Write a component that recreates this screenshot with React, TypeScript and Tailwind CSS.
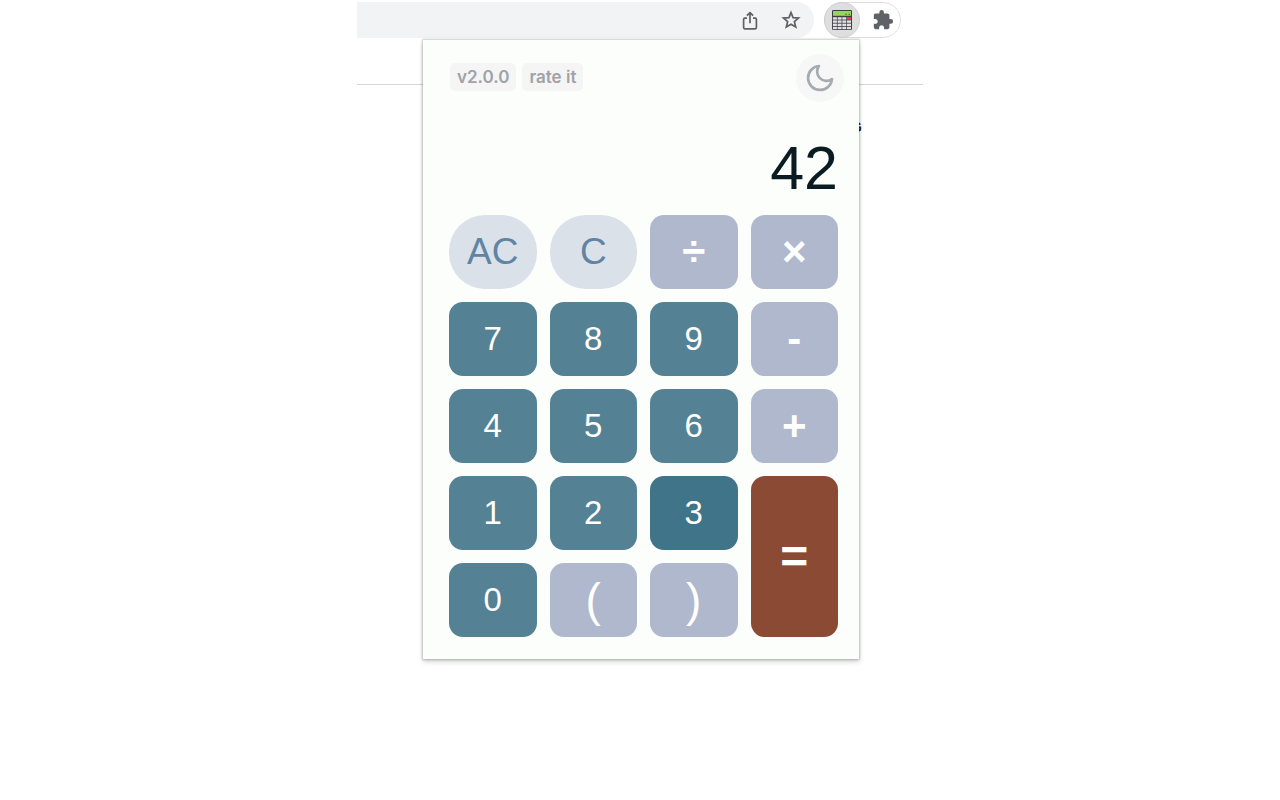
import { MdExtension } from "react-icons/md";

type Key = { label: string; name?: string; style: string };

const NUMBER = "rounded-[14px] bg-[#548294] pb-[2px] text-[33px] text-white";
const ACTIVE = "rounded-[14px] bg-[#407488] pb-[2px] text-[33px] text-white";
const CLEAR = "rounded-[36px] bg-[#dbe1e9] pb-[2px] text-[37px] text-[#5f84a4]";
const OPERATOR = "rounded-[14px] bg-[#b0b8ce] text-[42px] font-bold text-white";
const PAREN = "rounded-[14px] bg-[#b0b8ce] text-[46px] text-white";
const EQUALS = "row-span-2 rounded-[14px] bg-[#8a4a33] text-[48px] font-bold text-white";

const keys: Key[] = [
  { label: "AC", name: "All clear", style: CLEAR },
  { label: "C", name: "Clear", style: CLEAR },
  { label: "÷", name: "Divide", style: OPERATOR },
  { label: "×", name: "Multiply", style: OPERATOR },
  { label: "7", style: NUMBER },
  { label: "8", style: NUMBER },
  { label: "9", style: NUMBER },
  { label: "-", name: "Subtract", style: OPERATOR },
  { label: "4", style: NUMBER },
  { label: "5", style: NUMBER },
  { label: "6", style: NUMBER },
  { label: "+", name: "Add", style: OPERATOR },
  { label: "1", style: NUMBER },
  { label: "2", style: NUMBER },
  { label: "3", style: ACTIVE },
  { label: "=", name: "Equals", style: EQUALS },
  { label: "0", style: NUMBER },
  { label: "(", name: "Open parenthesis", style: PAREN },
  { label: ")", name: "Close parenthesis", style: PAREN },
];

function CalculatorIcon() {
  const rows = [7.2, 10.4, 13.6, 16.8];
  const cols = [0.9, 5.6, 10.3, 15];
  return (
    <svg viewBox="0 0 20 20" className="size-5" aria-hidden="true">
      <rect width="20" height="20" rx="1.3" fill="#3f3e42" />
      <rect x="1" y="1" width="18" height="4.8" fill="#96d65c" />
      <path d="M13.4 4.4h1.3M16.6 4.4h1.3" stroke="#47722c" strokeWidth="1.1" />
      {rows.map((y, r) =>
        cols.map((x, c) => (
          <rect
            key={`${x}-${y}`}
            x={x}
            y={y}
            width="4"
            height="2.4"
            fill={r === 0 && c === 3 ? "#f0444c" : "#e2e1e4"}
          />
        )),
      )}
    </svg>
  );
}

function ShareIcon() {
  return (
    <svg
      viewBox="0 0 20 20"
      className="size-5"
      fill="none"
      stroke="currentColor"
      strokeWidth="1.7"
      strokeLinejoin="round"
      aria-hidden="true"
    >
      <path d="M7 8.2H4.8a1.2 1.2 0 0 0-1.2 1.2v8.2a1.2 1.2 0 0 0 1.2 1.2h10.4a1.2 1.2 0 0 0 1.2-1.2V9.4a1.2 1.2 0 0 0-1.2-1.2H13" />
      <path d="M10 13.2V2.8M6.9 5.7 10 2.6l3.1 3.1" />
    </svg>
  );
}

function StarIcon() {
  return (
    <svg
      viewBox="0 0 22 22"
      className="size-6"
      fill="none"
      stroke="currentColor"
      strokeWidth="1.6"
      aria-hidden="true"
    >
      <path d="M11 4.2 12.9 8.8 17.9 9.2 14.1 12.5 15.3 17.4 11 14.8 6.7 17.4 7.9 12.5 4.1 9.2 9.1 8.8Z" />
    </svg>
  );
}

function MoonIcon() {
  return (
    <svg
      viewBox="0 0 24 24"
      className="size-8"
      fill="none"
      stroke="#a6abaf"
      strokeWidth="2"
      strokeLinecap="round"
      strokeLinejoin="round"
      aria-hidden="true"
    >
      <path d="M21 12.79A9 9 0 1 1 11.21 3 7 7 0 0 0 21 12.79z" />
    </svg>
  );
}

function BrowserBar() {
  return (
    <header className="flex h-10 items-center gap-[10px] pr-[22px]">
      <div className="flex h-9 flex-1 items-center justify-end gap-[19px] rounded-r-full bg-[#f1f3f4] pr-[11px] text-[#5f6368]">
        <button type="button" aria-label="Share">
          <ShareIcon />
        </button>
        <button type="button" aria-label="Bookmark">
          <StarIcon />
        </button>
      </div>
      <div className="flex h-9 items-center gap-3 rounded-full border border-[#dfe0e2] pr-[6px]">
        <button
          type="button"
          aria-label="Calculator"
          className="-ml-px flex size-9 items-center justify-center rounded-full border border-[#cfcfd1] bg-[#dedede]"
        >
          <CalculatorIcon />
        </button>
        <button type="button" aria-label="Extensions" className="text-[#5f6368]">
          <MdExtension size={22} />
        </button>
      </div>
    </header>
  );
}

function Calculator() {
  return (
    <main className="absolute top-10 right-16 w-[436px] bg-[#fcfefc] pt-[14px] pr-[21px] pb-[22px] pl-[26px] shadow-[0_0_2px_1px_rgba(0,0,0,0.2),0_3px_5px_rgba(0,0,0,0.16)]">
      <div className="-mr-[6px] flex items-center justify-between">
        <div className="flex gap-[6px] pb-[2px] pl-px font-['Inter',sans-serif] text-[17px] leading-7 font-semibold text-[#a0a2a8]">
          <span className="rounded-[5px] bg-[#f4f5f4] px-[7px]">v2.0.0</span>
          <a href="#rate" className="rounded-[5px] bg-[#f4f5f4] px-[7px]">
            rate it
          </a>
        </div>
        <button
          type="button"
          aria-label="Dark mode"
          className="flex size-12 items-center justify-center rounded-full bg-[#f7f7f8]"
        >
          <MoonIcon />
        </button>
      </div>
      <output className="mt-8 block text-right text-[61px] leading-[68px] text-[#0a1c22]">42</output>
      <div className="mt-[13px] grid auto-rows-[74px] grid-cols-4 gap-[13px]">
        {keys.map((key) => (
          <button
            key={key.label}
            type="button"
            aria-label={key.name}
            className={`flex items-center justify-center leading-none ${key.style}`}
          >
            {key.label}
          </button>
        ))}
      </div>
    </main>
  );
}

export default function App() {
  return (
    <div className="min-h-screen bg-white font-['Liberation_Sans',Arial,sans-serif]">
      <div className="relative mx-auto max-w-[566px]">
        <BrowserBar />
        <div className="h-[45px] border-b border-[#d6d6d8]" />
        <p className="pt-8 pr-[61px] text-right text-[14px] leading-5 font-bold text-[#202124]">G</p>
        <Calculator />
      </div>
    </div>
  );
}
